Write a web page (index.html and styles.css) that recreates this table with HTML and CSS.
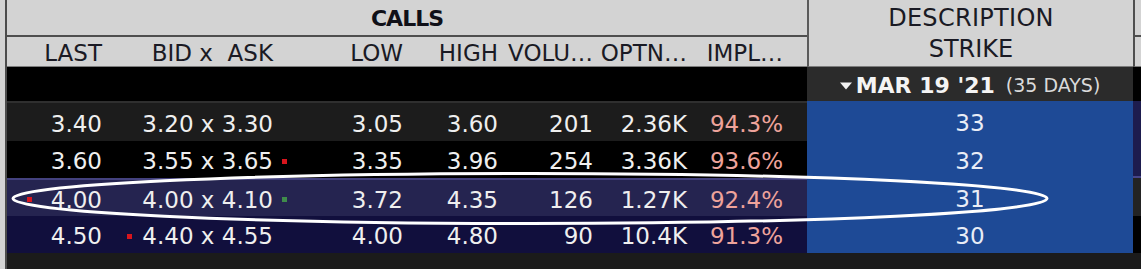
FILE: index.html
```html
<!DOCTYPE html>
<html lang="en">
<head>
<meta charset="utf-8">
<title>Option chain</title>
<link rel="stylesheet" href="styles.css">
</head>
<body>
<div class="screen">
  <div class="edge"></div>
  <div class="board">
    <div class="head">
      <div class="calls-head">
        <div class="calls-title">CALLS</div>
        <div class="labels">
          <div class="lab">LAST</div>
          <div class="lab lab-bid">BID x&nbsp; ASK</div>
          <div class="lab">LOW</div>
          <div class="lab">HIGH</div>
          <div class="lab">VOLU…</div>
          <div class="lab">OPTN…</div>
          <div class="lab lab-impl">IMPL…</div>
        </div>
      </div>
      <div class="desc-head"><span>DESCRIPTION</span><span>STRIKE</span></div>
      <div class="side-head"><div class="side-top"></div><div class="side-bot"></div></div>
    </div>

    <div class="expiry">
      <div class="expiry-calls"></div>
      <div class="expiry-desc">
        <svg class="caret" width="12" height="8" viewBox="0 0 12 8"><path d="M0 0.5 H12 L6 7.5 Z" fill="#f2f2f2"/></svg>
        <b class="exp-date">MAR 19 '21</b>
        <span class="exp-days">(35 DAYS)</span>
      </div>
      <div class="expiry-side"></div>
    </div>

    <div class="row r1">
      <div class="c c-last"><i class="dot"></i><span>3.40</span></div>
      <div class="c c-bid"><i class="dot"></i><span>3.20 x 3.30</span><i class="dot"></i></div>
      <div class="c">3.05</div>
      <div class="c">3.60</div>
      <div class="c">201</div>
      <div class="c">2.36K</div>
      <div class="c c-impl">94.3%</div>
      <div class="strike">33</div>
      <div class="side"></div>
    </div>

    <div class="row r2">
      <div class="c c-last"><i class="dot"></i><span>3.60</span></div>
      <div class="c c-bid"><i class="dot"></i><span>3.55 x 3.65</span><i class="dot red"></i></div>
      <div class="c">3.35</div>
      <div class="c">3.96</div>
      <div class="c">254</div>
      <div class="c">3.36K</div>
      <div class="c c-impl">93.6%</div>
      <div class="strike">32</div>
      <div class="side"></div>
    </div>

    <div class="row r3">
      <div class="c c-last"><i class="dot red"></i><span>4.00</span></div>
      <div class="c c-bid"><i class="dot"></i><span>4.00 x 4.10</span><i class="dot green"></i></div>
      <div class="c">3.72</div>
      <div class="c">4.35</div>
      <div class="c">126</div>
      <div class="c">1.27K</div>
      <div class="c c-impl">92.4%</div>
      <div class="strike">31</div>
      <div class="side"></div>
    </div>

    <div class="row r4">
      <div class="c c-last"><i class="dot"></i><span>4.50</span></div>
      <div class="c c-bid"><i class="dot red"></i><span>4.40 x 4.55</span><i class="dot"></i></div>
      <div class="c">4.00</div>
      <div class="c">4.80</div>
      <div class="c">90</div>
      <div class="c">10.4K</div>
      <div class="c c-impl">91.3%</div>
      <div class="strike">30</div>
      <div class="side"></div>
    </div>

    <div class="foot"></div>
  </div>

  <svg class="mark" width="1141" height="269" viewBox="0 0 1141 269">
    <ellipse cx="530" cy="198.5" rx="517" ry="25" fill="none" stroke="#ffffff" stroke-width="3"/>
  </svg>
</div>
</body>
</html>
```

FILE: styles.css
```css
* { box-sizing: border-box; }

html, body {
  margin: 0;
  padding: 0;
  background: #1b1b1b;
}

body {
  font-family: "DejaVu Sans", "Liberation Sans", sans-serif;
  font-size: 23px;
}

.screen {
  position: relative;
  display: flex;
  width: 1141px;
  height: 269px;
  overflow: hidden;
}

.edge {
  width: 7px;
  flex: none;
  background: #d3d3d3;
  border-right: 2px solid #4c4c4c;
}

.board {
  width: 1134px;
  display: flex;
  flex-direction: column;
}

/* ---------- header ---------- */
.head {
  display: grid;
  grid-template-columns: 800px 326px 8px;
  height: 67px;
  background: #d3d3d3;
  color: #1a1a24;
}

.calls-head {
  display: flex;
  flex-direction: column;
  border-bottom: 2px solid #7c7c7c;
}

.calls-title {
  height: 37px;
  border-bottom: 2px solid #4e4e4e;
  display: flex;
  align-items: center;
  justify-content: center;
  font-weight: bold;
  font-size: 22px;
  letter-spacing: -1px;
  color: #101018;
  padding-top: 1px;
}

.labels {
  flex: 1;
  display: grid;
  grid-template-columns: 99px 186px 115px 95px 95px 94px 116px;
}

.lab {
  display: flex;
  align-items: center;
  justify-content: flex-end;
  padding-right: 4px;
  padding-top: 3px;
  white-space: nowrap;
}

.lab-bid { padding-right: 19px; }
.lab-impl { padding-right: 24px; }

.desc-head {
  border-left: 2px solid #5a5a5a;
  border-bottom: 2px solid #7c7c7c;
  display: flex;
  flex-direction: column;
  align-items: center;
  justify-content: center;
  font-size: 24px;
  line-height: 31px;
  padding-top: 2px;
}

.desc-head span:first-child { letter-spacing: 0.3px; }

.side-head {
  border-left: 2px solid #4e4e4e;
  display: flex;
  flex-direction: column;
  border-bottom: 2px solid #7c7c7c;
}

.side-top {
  height: 37px;
  border-bottom: 2px solid #4e4e4e;
}

/* ---------- expiry row ---------- */
.expiry {
  display: grid;
  grid-template-columns: 800px 326px 8px;
  height: 34px;
}

.expiry-calls,
.expiry-side { background: #000; }

.expiry-desc {
  background: #2b2b2b;
  color: #f4f4f4;
  display: flex;
  align-items: center;
  justify-content: center;
  padding-top: 2px;
  white-space: nowrap;
}

.caret { margin-right: 4px; margin-top: 2px; }

.exp-date {
  font-size: 22px;
  font-weight: bold;
}

.exp-days {
  font-size: 19px;
  color: #dadada;
  margin-left: 11px;
}

/* ---------- data rows ---------- */
.row {
  display: grid;
  grid-template-columns: 99px 186px 115px 95px 95px 94px 116px 326px 8px;
  color: #efefef;
}

.c {
  display: flex;
  align-items: center;
  justify-content: flex-end;
  padding-right: 4px;
  padding-top: 3px;
  white-space: nowrap;
}

.c-last {
  justify-content: space-between;
  padding-left: 20px;
}

.c-bid { padding-right: 5px; }
.c-bid .dot:first-child { margin-right: 10px; }
.c-bid .dot:last-child { margin-left: 9px; }

.c-impl {
  padding-right: 24px;
  color: #eea39b;
}

.dot {
  display: block;
  width: 5px;
  height: 5px;
  visibility: hidden;
}

.dot.red { visibility: visible; background: #d8151d; }
.dot.green { visibility: visible; background: #3f8c4b; }

.strike {
  background: #1e4a96;
  color: #e9edf6;
  display: flex;
  align-items: center;
  justify-content: center;
  padding-top: 3px;
}

.r1 { height: 40px; }
.r1 .c { background: #1c1c1c; border-top: 2px solid #2f2f2f; }
.r1 .side { background: #1d1c4e; }

.r2 { height: 37px; }
.r2 .c { background: #000; }
.r2 .side { background: #1d1c4e; border-bottom: 2px solid #47458a; }

.r3 { height: 38px; }
.r3 .c { background: #252450; border-top: 2px solid #43417e; }
.r3 .side { background: #232323; }

.r4 { height: 37px; }
.r4 .c { background: #110f3d; }
.r4 .side { background: #000; }

.foot {
  flex: 1;
  background: #1b1b1b;
}

/* ---------- annotation overlay ---------- */
.mark {
  position: absolute;
  left: 0;
  top: 0;
  pointer-events: none;
}
```
